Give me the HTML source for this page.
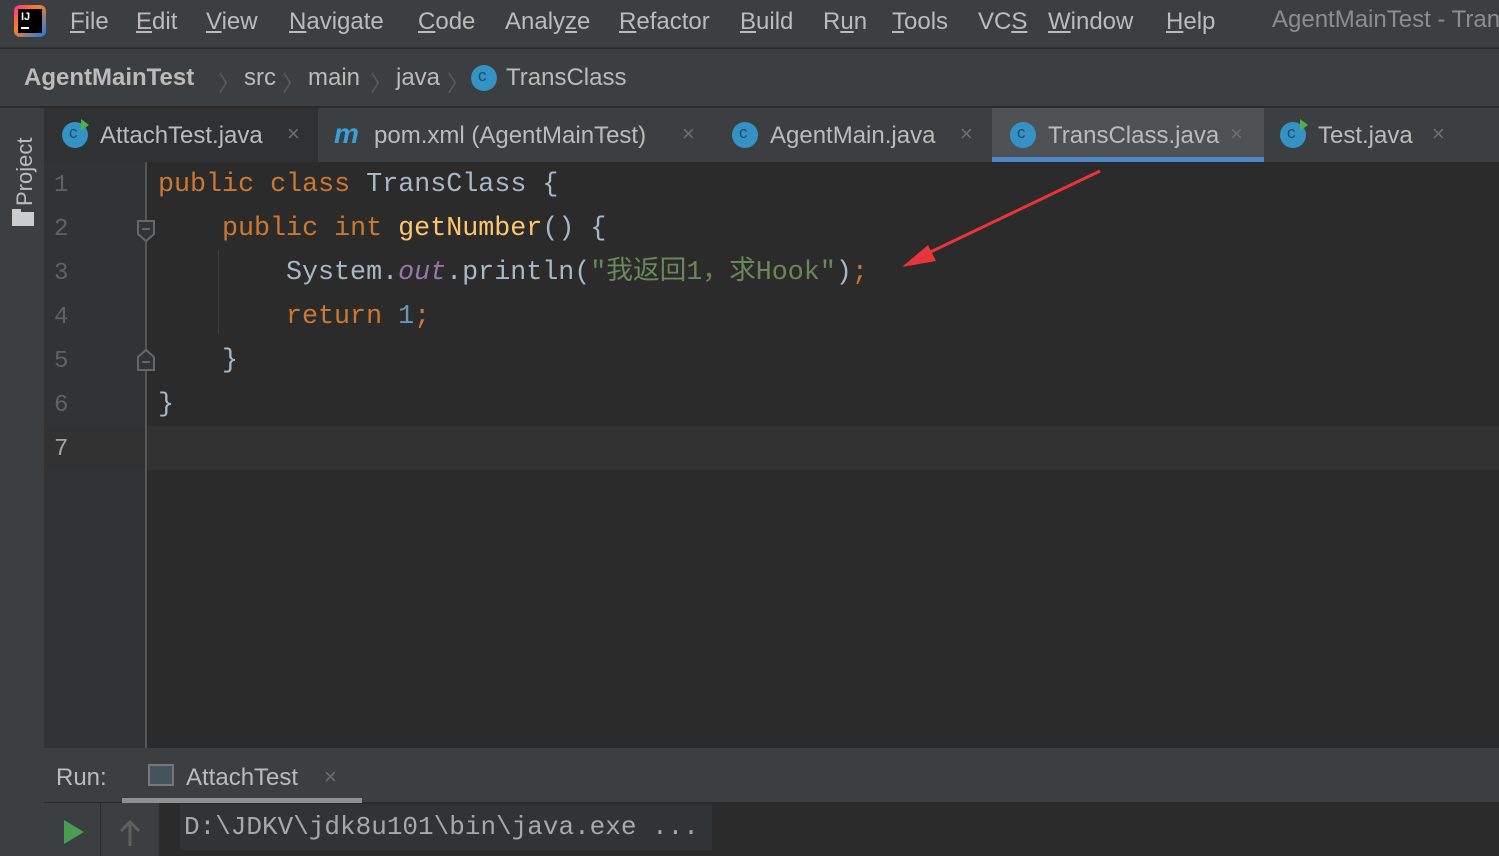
<!DOCTYPE html>
<html><head><meta charset="utf-8"><style>
*{margin:0;padding:0;box-sizing:border-box}
body{width:1499px;height:856px;overflow:hidden;background:#2b2b2b;font-family:"Liberation Sans","Noto Sans CJK SC",sans-serif;color:#bbb;position:relative}
.abs{position:absolute;white-space:nowrap}
.menu{left:0;top:0;width:1499px;height:48px;background:#3c3f41;border-bottom:1px solid #323232}
.menu span{position:absolute;top:8px;font-size:24px;color:#bbb}
.menu u{text-decoration:underline}
.crumb{left:0;top:49px;width:1499px;height:58px;background:#3c3f41;border-bottom:1px solid #2b2b2b}
.crumb span{position:absolute;top:15px;font-size:24px;color:#bbb}
.sep{color:#5a5d5f!important;font-size:22px!important;top:17px!important}
.tabs{left:44px;top:108px;width:1455px;height:54px;background:#3c3f41}
.tab{position:absolute;top:0;height:54px;font-size:24px;color:#bbb}
.tab .t{position:absolute;top:14px}
.tab .x{position:absolute;top:13px;color:#6e6e6e;font-size:22px}
.ci{position:absolute;width:26px;height:26px;border-radius:50%;background:#3592c4;top:14px}
.ci:after{content:"c";position:absolute;left:7px;top:1px;font-size:17px;color:#1c4f6a;font-family:"Liberation Sans",sans-serif}
.left{left:0;top:108px;width:44px;height:748px;background:#3c3f41}
.gutter{left:44px;top:162px;width:102px;height:586px;background:#313335}
.ln{position:absolute;left:54px;font-family:"Liberation Mono",monospace;font-size:24px;color:#606366;line-height:30px}
.code{position:absolute;font-family:"Liberation Mono",monospace;font-size:26.7px;color:#a9b7c6;line-height:32px}
.k{color:#cc7832}.f{color:#ffc66d}.o{color:#9876aa;font-style:italic}.s{color:#6a8759}.n{color:#6897bb}
</style></head><body>
<div class="abs menu">
 <div style="position:absolute;left:14px;top:5px;width:32px;height:32px;border-radius:6px;background:linear-gradient(135deg,#ff318c,#fc801d 40%,#087cfa);"></div>
 <div style="position:absolute;left:18px;top:9px;width:24px;height:24px;background:#000;color:#fff;font-size:11px;font-weight:bold;padding:2px 3px">IJ<div style="width:8px;height:2px;background:#fff;margin-top:4px"></div></div>
 <span style="left:70px"><u>F</u>ile</span><span style="left:136px"><u>E</u>dit</span><span style="left:206px"><u>V</u>iew</span><span style="left:289px"><u>N</u>avigate</span><span style="left:418px"><u>C</u>ode</span><span style="left:505px">Analy<u>z</u>e</span><span style="left:619px"><u>R</u>efactor</span><span style="left:740px"><u>B</u>uild</span><span style="left:823px">R<u>u</u>n</span><span style="left:892px"><u>T</u>ools</span><span style="left:978px">VC<u>S</u></span><span style="left:1048px"><u>W</u>indow</span><span style="left:1166px"><u>H</u>elp</span><span style="left:1272px;top:6px;color:#8d8d8d">AgentMainTest - TransClass</span>
</div>
<div class="abs crumb">
 <span style="left:24px;font-weight:bold">AgentMainTest</span><span class="sep" style="left:218px">〉</span>
 <span style="left:244px">src</span><span class="sep" style="left:282px">〉</span>
 <span style="left:308px">main</span><span class="sep" style="left:370px">〉</span>
 <span style="left:396px">java</span><span class="sep" style="left:447px">〉</span>
 <div class="ci" style="left:471px;top:16px"></div>
 <span style="left:506px">TransClass</span>
</div>
<div class="abs left">
 <div style="position:absolute;left:12px;top:8px;transform-origin:0 0;transform:rotate(-90deg) translate(-90px,0);font-size:22px;color:#bbb">Project</div>
 <div style="position:absolute;left:12px;top:104px;width:22px;height:14px;background:#ccc"></div>
 <div style="position:absolute;left:12px;top:101px;width:9px;height:4px;background:#ccc"></div>
</div>
<div class="abs tabs">
 <div class="tab" style="left:0;width:274px;background:#2f3133"><div class="ci" style="left:18px"></div><div style="position:absolute;left:37px;top:11px;width:0;height:0;border-left:8px solid #4cb34c;border-top:6px solid transparent;border-bottom:6px solid transparent"></div><span class="t" style="left:56px">AttachTest.java</span><span class="x" style="left:243px">×</span></div>
 <div class="tab" style="left:290px;width:380px"><span class="t" style="left:0;top:10px;color:#3aa0d8;font-weight:bold;font-style:italic;font-size:28px">m</span><span class="t" style="left:40px">pom.xml (AgentMainTest)</span><span class="x" style="left:348px">×</span></div>
 <div class="tab" style="left:688px;width:260px"><div class="ci" style="left:0"></div><span class="t" style="left:38px">AgentMain.java</span><span class="x" style="left:228px">×</span></div>
 <div class="tab" style="left:948px;width:272px;background:#4e5254"><div class="ci" style="left:18px"></div><span class="t" style="left:56px">TransClass.java</span><span class="x" style="left:238px">×</span><div style="position:absolute;left:0;bottom:0;width:272px;height:5px;background:#4a88c7"></div></div>
 <div class="tab" style="left:1236px;width:210px"><div class="ci" style="left:0"></div><div style="position:absolute;left:20px;top:11px;width:0;height:0;border-left:8px solid #4cb34c;border-top:6px solid transparent;border-bottom:6px solid transparent"></div><span class="t" style="left:38px">Test.java</span><span class="x" style="left:152px">×</span></div>
</div>
<div class="abs gutter"></div>
<div class="abs" style="left:146px;top:426px;width:1353px;height:44px;background:#323232"></div>
<div class="abs" style="left:44px;top:426px;width:102px;height:44px;background:#323232"></div>
<div class="abs" style="left:145px;top:162px;width:2px;height:586px;background:#555"></div>
<div class="abs" style="left:218px;top:250px;width:1px;height:84px;background:#3b3b3b"></div>
<svg class="abs" style="left:136px;top:219px" width="20" height="24"><path d="M2 2H18V15L10 22L2 15Z" fill="#313335" stroke="#666" stroke-width="2"/><path d="M6 10H14" stroke="#666" stroke-width="2"/></svg>
<svg class="abs" style="left:136px;top:348px" width="20" height="24"><path d="M2 22H18V9L10 2L2 9Z" fill="#313335" stroke="#666" stroke-width="2"/><path d="M6 14H14" stroke="#666" stroke-width="2"/></svg>
<div class="ln" style="top:171px">1</div><div class="ln" style="top:215px">2</div><div class="ln" style="top:259px">3</div><div class="ln" style="top:303px">4</div><div class="ln" style="top:347px">5</div><div class="ln" style="top:391px">6</div><div class="ln" style="top:435px;color:#a4a3a3">7</div>
<div class="code" style="left:158px;top:169px"><span class="k">public class</span> TransClass {</div>
<div class="code" style="left:222px;top:213px"><span class="k">public int</span> <span class="f">getNumber</span>() {</div>
<div class="code" style="left:286px;top:257px">System.<span class="o">out</span>.println(<span class="s">"我返回1，求Hook"</span>)<span class="k">;</span></div>
<div class="code" style="left:286px;top:301px"><span class="k">return</span> <span class="n">1</span><span class="k">;</span></div>
<div class="code" style="left:222px;top:345px">}</div>
<div class="code" style="left:158px;top:389px">}</div>
<svg class="abs" style="left:890px;top:165px" width="220" height="110"><path d="M210 6L30 92" stroke="#e8343a" stroke-width="3"/><path d="M12 102L38 80L46 96Z" fill="#e8343a"/></svg>
<div class="abs" style="left:44px;top:748px;width:1455px;height:54px;background:#3c3f41"></div>
<div class="abs" style="left:56px;top:764px;font-size:24px;color:#bbb">Run:</div>
<div class="abs" style="left:148px;top:764px;width:26px;height:22px;border:2px solid #777;background:#44535e"></div>
<div class="abs" style="left:186px;top:764px;font-size:24px;color:#bbb">AttachTest</div>
<div class="abs" style="left:324px;top:764px;font-size:22px;color:#6e6e6e">×</div>
<div class="abs" style="left:122px;top:798px;width:240px;height:5px;background:#8d8f91"></div>
<div class="abs" style="left:44px;top:803px;width:56px;height:53px;background:#3c3f41"></div>
<div class="abs" style="left:101px;top:803px;width:58px;height:53px;background:#3c3f41"></div>
<div class="abs" style="left:64px;top:820px;width:0;height:0;border-left:20px solid #499c54;border-top:12px solid transparent;border-bottom:12px solid transparent"></div>
<svg class="abs" style="left:118px;top:818px" width="24" height="30"><path d="M12 28V4M3 13L12 4L21 13" stroke="#5e6060" stroke-width="3" fill="none"/></svg>
<div class="abs" style="left:180px;top:804px;width:532px;height:46px;background:#313335"></div>
<div class="abs" style="left:184px;top:812px;font-family:'Liberation Mono',monospace;font-size:26px;color:#a8a8a8">D:\JDKV\jdk8u101\bin\java.exe ...</div>
</body></html>
